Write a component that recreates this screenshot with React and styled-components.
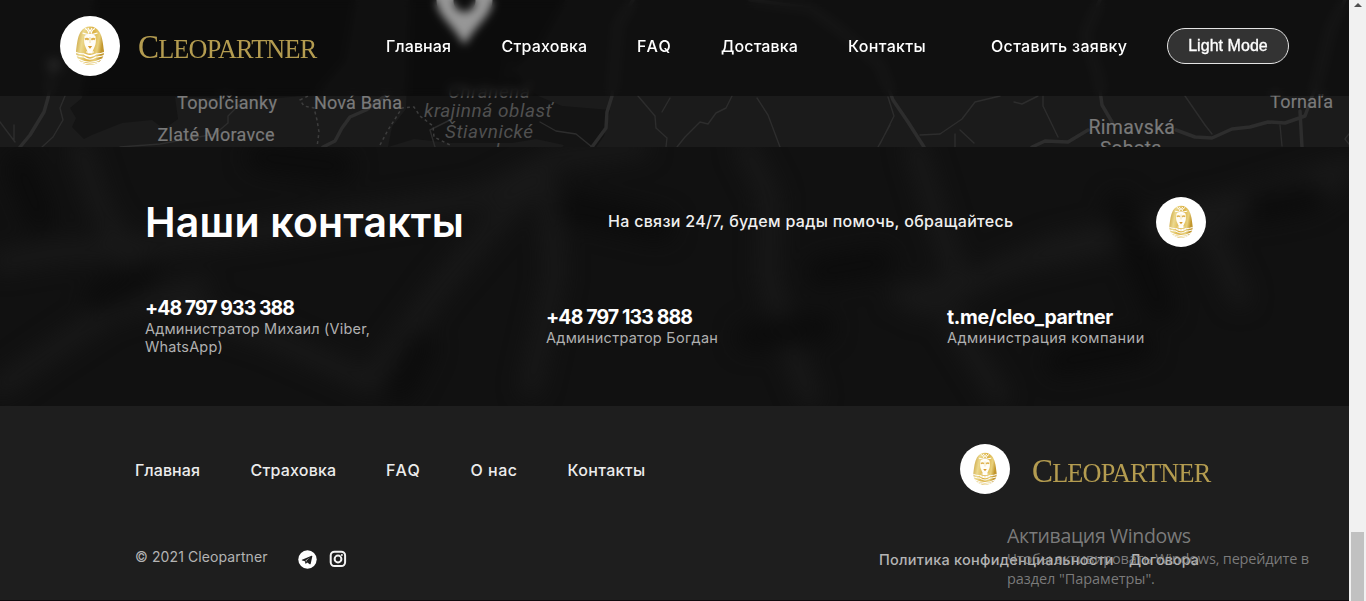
import React from 'react';
import styled, { createGlobalStyle } from 'styled-components';

const GlobalStyle = createGlobalStyle`
  * { box-sizing: border-box; }
  body {
    margin: 0;
    background: #1e1e1e;
    color: #fff;
    font-family: Inter, "Liberation Sans", sans-serif;
    overflow: hidden;
  }
`;

const Window = styled.div`
  position: relative;
  display: flex;
  width: 1366px;
  height: 601px;
  overflow: hidden;
`;

const Page = styled.div`
  position: relative;
  display: flex;
  flex-direction: column;
  width: 1349px;
  height: 601px;
  background: #1e1e1e;
  border-bottom: 1px solid #0e0a0e;
`;

const MapLayer = styled.svg`
  position: absolute;
  top: 0;
  left: 0;
  display: block;
`;

const Header = styled.header`
  position: relative;
  display: flex;
  align-items: center;
  flex: none;
  height: 96px;
  padding: 0 60px 4px;
  background: rgba(0, 0, 0, 0.38);
  backdrop-filter: blur(4px);
`;

const MapGap = styled.div`
  flex: none;
  height: 51px;
`;

const Badge = styled.span`
  display: block;
  flex: none;
  width: ${(p) => p.$size}px;
  height: ${(p) => p.$size}px;
  border-radius: 50%;
  background: #fff;

  svg {
    display: block;
  }
`;

const Wordmark = styled.span`
  display: block;
  width: 179px;
  height: 34px;
  margin: ${(p) => p.$margin};
  font-family: "Liberation Serif", serif;
  font-size: 27.5px;
  line-height: 34px;
  letter-spacing: -0.9px;
  text-transform: uppercase;
  white-space: nowrap;
  color: #b49c50;
  transform: scaleX(0.955);
  transform-origin: 0 50%;

  &::first-letter {
    font-size: 33px;
  }
`;

const Nav = styled.nav`
  display: flex;
  gap: 50px;
  margin-left: ${(p) => p.$left || 0}px;
  padding-top: ${(p) => p.$drop}px;
`;

const NavLink = styled.a`
  width: ${(p) => p.$width}px;
  font-size: 16px;
  font-weight: 500;
  line-height: 20px;
  letter-spacing: ${(p) => p.$track}px;
  white-space: nowrap;
  color: ${(p) => p.$color || '#fff'};
`;

const RequestLink = styled(NavLink)`
  margin-left: 65px;
`;

const ModeButton = styled.button`
  width: 122px;
  height: 36px;
  margin: 0 0 1px 40px;
  padding: 0;
  border: 1px solid #e4e4e4;
  border-radius: 18px;
  background: #333;
  color: #fff;
  font-family: "Liberation Sans", sans-serif;
  font-size: 16px;
  letter-spacing: 0.05px;
  -webkit-text-stroke: 0.35px #fff;
`;

const Contacts = styled.section`
  position: relative;
  flex: none;
  height: 259px;
  padding: 49px 143px 0 145px;
  background: #111;
  overflow: hidden;
`;

const ContactsHead = styled.div`
  position: relative;
  display: flex;
  align-items: center;
  height: 52px;
`;

const Title = styled.h1`
  width: 463px;
  margin: 0;
  font-size: 41px;
  font-weight: 600;
  line-height: 50px;
  letter-spacing: 0.2px;
  white-space: nowrap;
`;

const Lead = styled.p`
  width: 548px;
  margin: 0;
  padding-bottom: 2px;
  font-size: 16px;
  font-weight: 500;
  line-height: 20px;
  letter-spacing: 0.3px;
  color: #f0f0f0;
`;

const ContactGrid = styled.div`
  position: relative;
  display: grid;
  grid-template-columns: 401px 401px 257px;
  align-items: center;
  height: 60px;
  margin-top: 49px;
`;

const Card = styled.div`
  display: flex;
  flex-direction: column;
`;

const Phone = styled.strong`
  padding-bottom: 2px;
  font-size: 19.5px;
  font-weight: 700;
  line-height: 20px;
  letter-spacing: ${(p) => p.$track}px;
  white-space: nowrap;
`;

const Person = styled.span`
  max-width: 257px;
  font-size: 14.5px;
  line-height: 18px;
  letter-spacing: ${(p) => p.$track}px;
  color: #b0b0b0;
`;

const Footer = styled.footer`
  display: flex;
  flex-direction: column;
  flex: 1;
  padding: 38px 138px 0 135px;
  background: #1e1e1e;
`;

const FooterTop = styled.div`
  display: flex;
  align-items: center;
  justify-content: space-between;
  height: 50px;
`;

const Brand = styled.div`
  display: flex;
  align-items: center;
`;

const FooterBottom = styled.div`
  display: flex;
  align-items: center;
  height: 24px;
  margin-top: 53px;
`;

const Copyright = styled.span`
  width: 163px;
  padding-bottom: 4px;
  font-size: 14px;
  line-height: 20px;
  letter-spacing: 0.1px;
  color: #b4b4b4;
`;

const Socials = styled.div`
  display: flex;
  align-items: center;
  gap: 12px;
  margin-right: auto;
`;

const Legal = styled.div`
  display: flex;
  gap: 15px;
  margin-right: 12px;
  padding-top: 2px;
`;

const LegalLink = styled.a`
  width: ${(p) => p.$width}px;
  font-size: 14.5px;
  font-weight: 500;
  line-height: 20px;
  letter-spacing: ${(p) => p.$track}px;
  white-space: nowrap;
  color: #b4b4b4;
`;

const Watermark = styled.div`
  position: absolute;
  top: 523px;
  left: 1007px;
  width: 320px;
  font-family: "Open Sans", sans-serif;
  color: rgba(150, 150, 150, 0.78);
  pointer-events: none;
`;

const WatermarkTitle = styled.div`
  font-size: 19.5px;
  line-height: 26px;
  letter-spacing: -0.34px;
`;

const WatermarkText = styled.div`
  font-size: 14.5px;
  line-height: 20px;
  letter-spacing: ${(p) => p.$track}px;
  white-space: nowrap;
`;

const Scrollbar = styled.div`
  display: flex;
  flex-direction: column;
  justify-content: space-between;
  align-items: center;
  width: 17px;
  height: 601px;
  background: #f1f1f1;
`;

const ScrollArrow = styled.span`
  margin-top: 3px;
  border: 4px solid transparent;
  border-top-width: 0;
  border-bottom-color: #505050;
`;

const ScrollThumb = styled.span`
  width: 13px;
  height: 69px;
  background: #c1c1c1;
`;

function Pharaoh({ size, id }) {
  return (
    <Badge $size={size}>
      <svg width={size} height={size} viewBox="0 0 60 60">
        <defs>
          <linearGradient id={id} x1="0" y1="0" x2="1" y2="0.25">
            <stop offset="0" stopColor="#c0942c" />
            <stop offset="0.3" stopColor="#ecd98e" />
            <stop offset="0.6" stopColor="#dbb040" />
            <stop offset="0.85" stopColor="#e8d07c" />
            <stop offset="1" stopColor="#c2962c" />
          </linearGradient>
        </defs>
        <path d="M30 10.500c-4 0-7.500 2-9.500 5.500C17.500 21 17 28 16 35c-.4 8 6 14 14 14s14.500-6 14-14c-1-7-1.500-14-4.500-19-2-3.500-5.500-5.500-9.500-5.500z" fill={`url(#${id})`} />
        <path d="M24.500 20c2-2.500 9-2.500 11 0 .8 5 .4 8-1 11-1 2-1.500 3.500-2 4.500v2h-5v-2c-.5-1-1-2.500-2-4.500-1.400-3-1.800-6-1-11z" fill="#fffdf6" />
        <path d="M25 23.500q2-1.500 3.700.2M31.300 23.700q2-1.700 3.700-.2" stroke="#dfb04a" strokeWidth="2" fill="none" />
        <path d="M30 21v6" stroke="#f0dfa8" strokeWidth="1" />
        <path d="M27.800 30h4.400l-2.200 2.800z" fill="#d9992c" />
        <path d="M25 12.500q3 1 4 5M35 12.500q-3 1-4 5M22.500 17q7.500 3 15 0M28 12l2 3.500 2-3.500" stroke="#fff" strokeWidth="1.200" fill="none" />
        <path d="M26 36h8M24 38q6 3 12 0M16 36.500q4 1.500 7.500 1.300 6.500 5.500 13 0 4 .2 7.500-1.300M16 39.500q6 1.500 8 1.500 6 4.500 12 0 2 0 8-1.500M18 43q12 6.500 24 0M21 46q9 4 18 0" stroke="#fff" strokeWidth="1.200" fill="none" />
      </svg>
    </Badge>
  );
}

function MapBackground() {
  return (
    <MapLayer width="1349" height="147" viewBox="0 0 1349 147">
      <rect width="1349" height="147" fill="#1b1b1b" />
      <g fill="#141414">
        <path d="M95 0h260l-10 60-30 35-50 4-90-2 3 22-14 10-12-9-30 3-30 12-8 4-12-12 4-9-6-10 12-10z" />
        <path d="M410 0h155l-25 45-30 25 28 26 24 10 48 4-6 26-12 17h-34l6-8-28-6-24 4h-60l-38-4-26 8 4-20 14-18z" />
      </g>
      <g fill="none" stroke="#2d2d2d" strokeLinejoin="round" strokeLinecap="round">
        <path strokeWidth="3.500" d="M55 60L48 98 44 112 30 135 20 147M385 96L366 110 350 117 342 128 335 141 323 147M633 0L618 25 615 60 612 96 607 112 606 128 592 147M750 0L810 8 840 30 880 65 893 100 908 122 924 147M1032 147L1045 141 1068 142 1088 130M1176 130L1195 137 1212 138 1232 129 1250 127 1268 122 1285 123 1305 116 1318 80 1330 30 1345 0M1100 0L1085 35 1098 75 1102 105 1112 122M1300 111L1302 147" />
        <path strokeWidth="1.400" d="M65 96L60 108 63 120 53 137 42 147M0 122L15 142M14 125V140M240 104L228 116 228 123 215 134 160 144 120 147M510 60L506 80M540 122L556 131 576 134 592 147M638 96L655 116 656 128 667 138 666 147M670 98L662 112M732 96L726 108 716 113 708 124 700 122 685 137 677 147M757 98L768 115 780 147M890 125L878 147M888 97L894 116 880 144M920 135L940 134 962 119 975 102 1000 96M1014 102L1022 104 1038 96M1043 96L1043 106 1058 137M1185 96L1205 125 1212 134M1280 125L1282 146M955 134V147M960 130L974 143M435 147L430 130 450 120M1349 134L1345 139 1349 144" />
      </g>
      <g fill="none" stroke="#3d3d3d" strokeWidth="1.500" strokeDasharray="3 3">
        <path d="M308 96L300 100 304 106 314 108 317 120 319 132 317 147M380 145L388 130 402 108 414 107 420 116 433 126 434 137 450 145" />
      </g>
      <path d="M464.500-28c15 0 28 12 28 28 0 15-16 24-28 45-12-21-28-30-28-45 0-16 13-28 28-28z" fill="#f4f4f4" />
      <circle cx="464.500" cy="1" r="11" fill="#171717" />
      <circle cx="54" cy="65" r="8" fill="#333" />
      <g fontFamily="Roboto, sans-serif" fontSize="18" fill="#7a7a7a" stroke="#7a7a7a" strokeWidth="0.200">
        <text x="177" y="108.500" letterSpacing="0.260">Topoľčianky</text>
        <text x="314" y="109" letterSpacing="0.180">Nová Baňa</text>
        <text x="157.500" y="140.500" letterSpacing="0.270">Zlaté Moravce</text>
        <text x="1088.500" y="134" fontSize="19.500" letterSpacing="0.300">Rimavská</text>
        <text x="1100" y="153.500" fontSize="19" letterSpacing="0.300">Sobota</text>
        <text x="1270" y="108" letterSpacing="0.260">Tornaľa</text>
      </g>
      <g fontFamily="Roboto, sans-serif" fontSize="19" fontStyle="italic" fill="#505050">
        <text x="448" y="98" textLength="82">Chránená</text>
        <text x="424" y="117" textLength="128">krajinná oblasť</text>
        <text x="445" y="137.500" textLength="88">Štiavnické</text>
        <text x="461" y="157" textLength="56">vrchy</text>
      </g>
    </MapLayer>
  );
}

function BlurredMap() {
  return (
    <MapLayer width="1349" height="259" viewBox="0 0 1349 259">
      <defs>
        <filter id="soft" x="-10%" y="-20%" width="120%" height="140%" colorInterpolationFilters="sRGB">
          <feGaussianBlur stdDeviation="11" />
        </filter>
      </defs>
      <g filter="url(#soft)" fill="none" strokeLinecap="round">
        <path stroke="#191919" strokeWidth="20" d="M0 115L60 105 130 100 260 85 480 50 560 10 640 0M0 240L50 205 110 165 200 140M80 0L100 60 130 110 150 150 270 190 370 235 440 140 500 70 540 30M745 0L770 50 768 130 790 200 810 250M915 0L940 80 960 140 900 150M1000 120L1090 100 1200 75 1330 40M920 160L1050 100 1180 70 1349 20M950 170L975 210 1000 250M1200 60L1240 150M550 45L555 130 530 240" />
        <path stroke="#0c0c0c" strokeWidth="28" d="M20 20L40 70M260 10L340 20M570 60L660 80M820 125L880 115M820 180L750 190M1120 60L1160 160M400 240L420 200M1060 215L1140 200M1260 60L1310 50M100 150L145 130" />
      </g>
    </MapLayer>
  );
}

function TelegramIcon() {
  return (
    <svg width="19" height="19" viewBox="0 0 19 19">
      <circle cx="9.500" cy="9.500" r="9.200" fill="#fff" />
      <path d="M4 9.700l9.600-4c.5-.2.9.1.7.8l-1.600 7.300c-.1.600-.5.700-1 .4l-2.400-1.800-1.200 1.200c-.4.400-.6.200-.7-.3l-.5-2.100-2.700-.8c-.6-.2-.6-.5-.2-.7zm3.600.8l.5 1.900.2-1.600 3.900-3.600z" fill="#1e1e1e" />
    </svg>
  );
}

function InstagramIcon() {
  return (
    <svg width="18" height="18" viewBox="0 0 18 18" fill="none" stroke="#f2f2f2">
      <rect x="1.700" y="1.700" width="14.400" height="14.400" rx="3.800" strokeWidth="2" />
      <circle cx="9" cy="9" r="3.400" strokeWidth="2" />
      <circle cx="12.900" cy="5.100" r="1" fill="#f2f2f2" stroke="none" />
    </svg>
  );
}

const headerLinks = [
  ['Главная', 65.5, 0.06],
  ['Страховка', 85.5, 0.2],
  ['FAQ', 34, 1.4],
  ['Доставка', 77, 0.12],
  ['Контакты', 78, 0.35],
];

const footerLinks = [
  ['Главная', 65.5, 0.06],
  ['Страховка', 85.5, 0.2],
  ['FAQ', 34.5, 1.4],
  ['О нас', 47, 0.5],
  ['Контакты', 78, 0.35],
];

const contacts = [
  ['+48 797 933 388', -0.97, 'Администратор Михаил (Viber, WhatsApp)', 0.18],
  ['+48 797 133 888', -0.89, 'Администратор Богдан', 0.27],
  ['t.me/cleo_partner', -0.35, 'Администрация компании', 0.46],
];

export default function App() {
  return (
    <Window>
      <GlobalStyle />
      <Page>
        <MapBackground />
        <Header>
          <Pharaoh size={60} id="goldHeader" />
          <Wordmark $margin="2px 0 0 18px">Cleopartner</Wordmark>
          <Nav $left={69} $drop={0}>
            {headerLinks.map(([label, width, track]) => (
              <NavLink key={label} $width={width} $track={track}>{label}</NavLink>
            ))}
          </Nav>
          <RequestLink $width={136} $track={0.32}>Оставить заявку</RequestLink>
          <ModeButton>Light Mode</ModeButton>
        </Header>
        <MapGap />
        <Contacts>
          <BlurredMap />
          <ContactsHead>
            <Title>Наши контакты</Title>
            <Lead>На связи 24/7, будем рады помочь, обращайтесь</Lead>
            <Pharaoh size={50} id="goldContacts" />
          </ContactsHead>
          <ContactGrid>
            {contacts.map(([phone, phoneTrack, person, personTrack]) => (
              <Card key={phone}>
                <Phone $track={phoneTrack}>{phone}</Phone>
                <Person $track={personTrack}>{person}</Person>
              </Card>
            ))}
          </ContactGrid>
        </Contacts>
        <Footer>
          <FooterTop>
            <Nav $drop={1}>
              {footerLinks.map(([label, width, track]) => (
                <NavLink key={label} $width={width} $track={track} $color="#ececec">{label}</NavLink>
              ))}
            </Nav>
            <Brand>
              <Pharaoh size={50} id="goldFooter" />
              <Wordmark $margin="4px 0 0 22px">Cleopartner</Wordmark>
            </Brand>
          </FooterTop>
          <FooterBottom>
            <Copyright>© 2021 Cleopartner</Copyright>
            <Socials>
              <TelegramIcon />
              <InstagramIcon />
            </Socials>
            <Legal>
              <LegalLink $width={235} $track={0.25}>Политика конфиденциальности</LegalLink>
              <LegalLink $width={70} $track={0}>Договора</LegalLink>
            </Legal>
          </FooterBottom>
        </Footer>
        <Watermark>
          <WatermarkTitle>Активация Windows</WatermarkTitle>
          <WatermarkText $track={-0.17}>Чтобы активировать Windows, перейдите в</WatermarkText>
          <WatermarkText $track={-0.06}>раздел "Параметры".</WatermarkText>
        </Watermark>
      </Page>
      <Scrollbar>
        <ScrollArrow />
        <ScrollThumb />
      </Scrollbar>
    </Window>
  );
}
